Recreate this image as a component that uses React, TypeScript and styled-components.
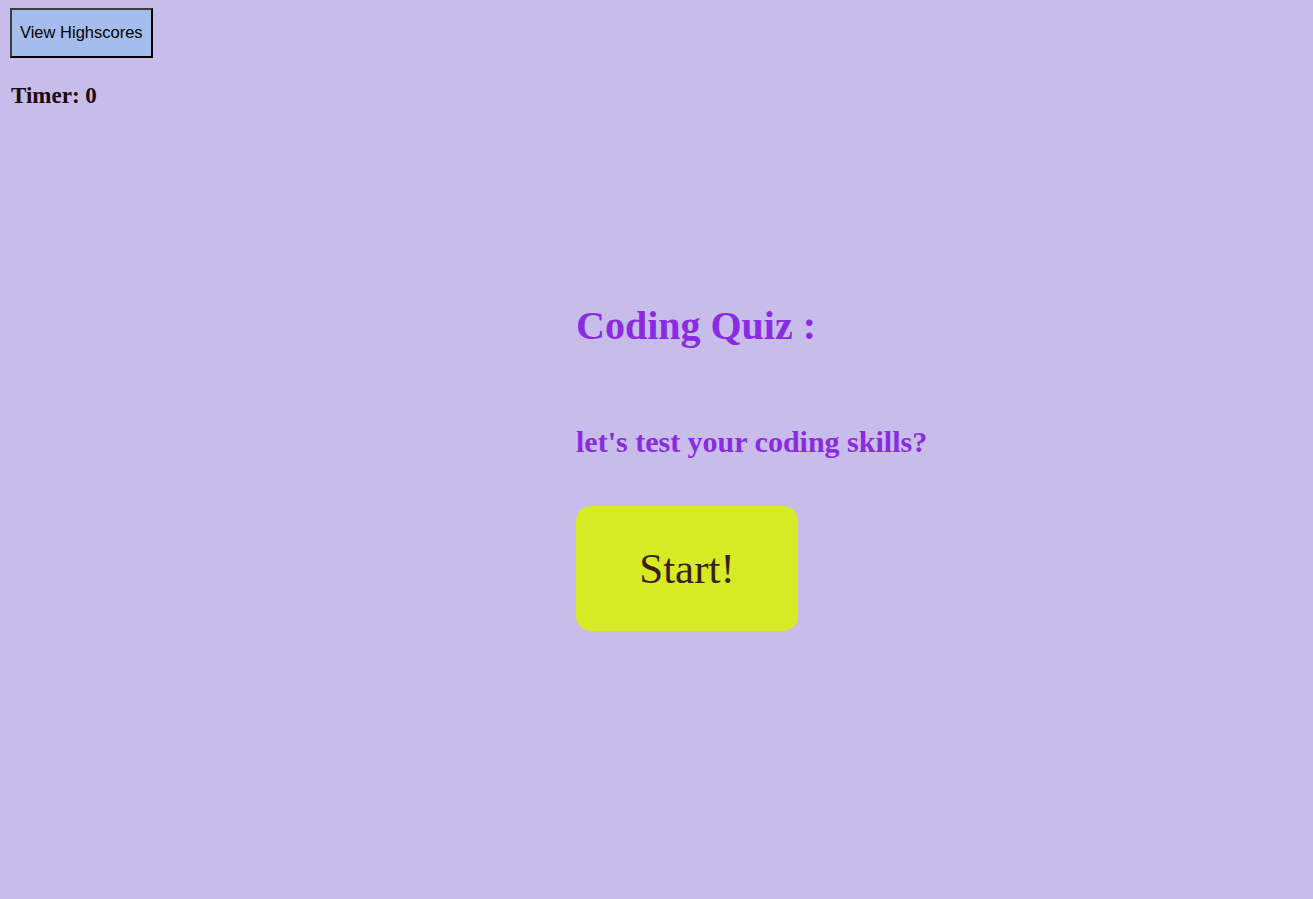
import styled, {createGlobalStyle} from "styled-components";

const GlobalStyle = createGlobalStyle`
  html, body {
    margin: 0;
    padding: 0;
    background-color: #c8bceb;
    min-height: 100%;
  }
  body {
    font-family: "Liberation Serif", "Times New Roman", serif;
  }
`;

const App = () => {
    return (
        <>
            <GlobalStyle/>
            <Page>
                <Header>
                    <HighscoresButton>View Highscores</HighscoresButton>
                    <Timer>Timer: 0</Timer>
                </Header>
                <Intro>
                    <Title>Coding Quiz :</Title>
                    <Subtitle>let's test your coding skills?</Subtitle>
                    <StartButton>Start!</StartButton>
                </Intro>
            </Page>
        </>
    )
}
export default App

const Page = styled.div`
  min-height: 899px;
  box-sizing: border-box;
  padding: 8px 0 0 10px;
  display: flex;
  flex-direction: column;
`;

const Header = styled.header`
  display: flex;
  flex-direction: column;
  align-items: flex-start;
  gap: 25px;
`;

const HighscoresButton = styled.button`
  font-family: "Liberation Sans", Arial, sans-serif;
  font-size: 16.5px;
  line-height: 18px;
  color: #000;
  background-color: #a5bdec;
  border: 2px outset #3c3c3c;
  border-right-color: #000;
  border-bottom-color: #000;
  padding: 13px 8px 15px;
  margin: 0;
  cursor: pointer;
`;

const Timer = styled.h3`
  margin: 0 0 0 1px;
  font-size: 23px;
  line-height: 26px;
  font-weight: bold;
  color: #1a0a10;
`;

const Intro = styled.main`
  display: flex;
  flex-direction: column;
  align-items: flex-start;
  padding-left: 566px;
  margin-top: 195px;
`;

const Title = styled.h1`
  margin: 0;
  font-size: 40px;
  line-height: 44px;
  font-weight: bold;
  color: #8a2be2;
`;

const Subtitle = styled.h2`
  margin: 77px 0 0;
  font-size: 30px;
  line-height: 33px;
  font-weight: bold;
  color: #8a2be2;
`;

const StartButton = styled.button`
  margin-top: 48px;
  width: 222px;
  height: 125px;
  border: none;
  border-radius: 15px;
  background-color: #d6eb23;
  color: #3d1f1a;
  font-family: "Liberation Serif", "Times New Roman", serif;
  font-size: 43px;
  cursor: pointer;
`;
